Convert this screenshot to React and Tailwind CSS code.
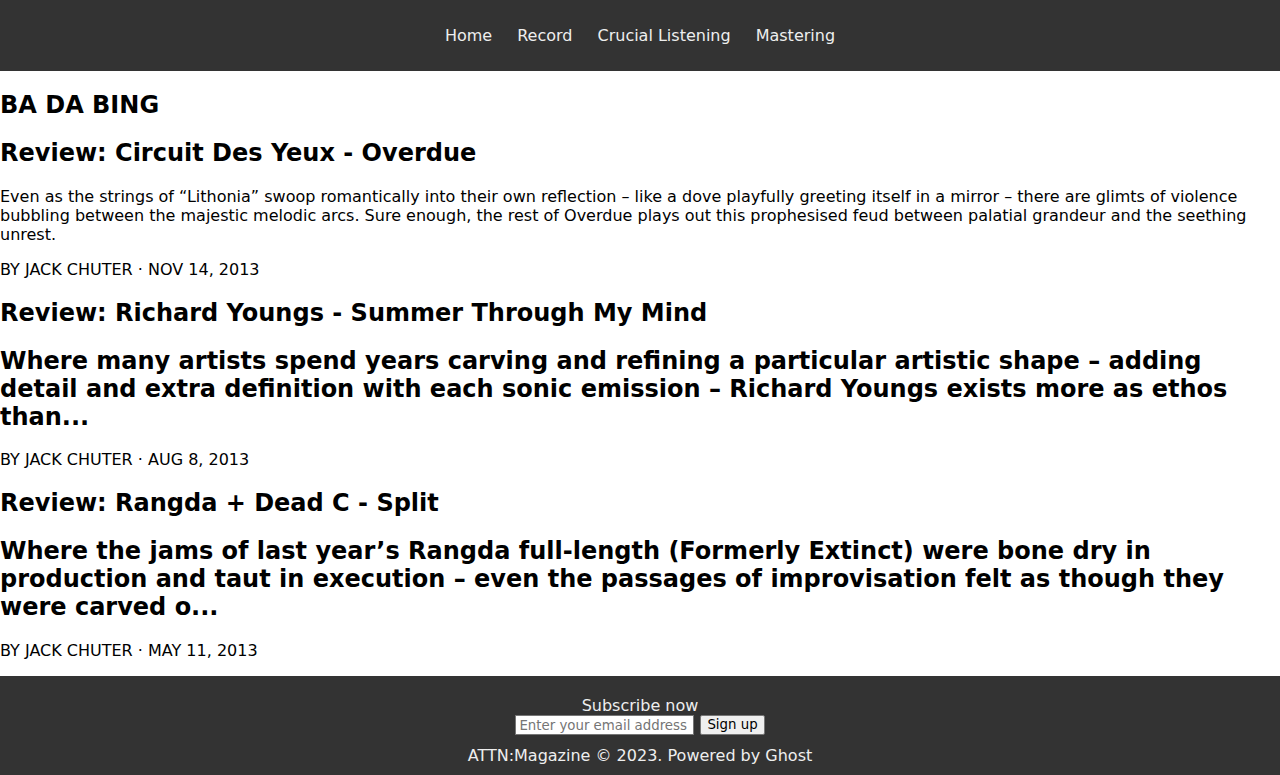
import React from 'react';

const navLinks = ['Home', 'Record', 'Crucial Listening', 'Mastering'];

const posts = [
    {
        id: 1,
        title: 'Review: Circuit Des Yeux - Overdue',
        excerpt: 'Even as the strings of “Lithonia” swoop romantically into their own reflection – like a dove playfully greeting itself in a mirror – there are glimts of violence bubbling between the majestic melodic arcs. Sure enough, the rest of Overdue plays out this prophesised feud between palatial grandeur and the seething unrest.',
        big: false,
        date: 'NOV 14, 2013',
    },
    {
        id: 2,
        title: 'Review: Richard Youngs - Summer Through My Mind',
        excerpt: 'Where many artists spend years carving and refining a particular artistic shape – adding detail and extra definition with each sonic emission – Richard Youngs exists more as ethos than...',
        big: true,
        date: 'AUG 8, 2013',
    },
    {
        id: 3,
        title: 'Review: Rangda + Dead C - Split',
        excerpt: 'Where the jams of last year’s Rangda full-length (Formerly Extinct) were bone dry in production and taut in execution – even the passages of improvisation felt as though they were carved o...',
        big: true,
        date: 'MAY 11, 2013',
    },
];

const App = () => {
    return (
        <div className="min-h-[775px] flex flex-col bg-white text-black font-['DejaVu_Sans',sans-serif] text-[16px] leading-[normal]">
            {/* CABECERA */}
            <header className="h-[71px] bg-[#333333] flex items-center justify-center">
                <nav className="flex gap-[25px]">
                    {navLinks.map((link) => (
                        <a key={link} href="#" className="text-[#eeeeee]">{link}</a>
                    ))}
                </nav>
            </header>

            {/* LISTA DE ARTICULOS */}
            <main className="flex-1 pt-[19.92px] pb-[15px]">
                <h2 className="text-[24px] font-bold">BA DA BING</h2>
                {posts.map((post) => (
                    <article key={post.id} className="mt-[19.92px]">
                        <h2 className="text-[24px] font-bold">{post.title}</h2>
                        {post.big ? (
                            <>
                                <h2 className="text-[24px] font-bold mt-[19.92px]">{post.excerpt}</h2>
                                <p className="mt-[19.92px]">BY JACK CHUTER · {post.date}</p>
                            </>
                        ) : (
                            <>
                                <p className="mt-[19.92px]">{post.excerpt}</p>
                                <p className="mt-[16px]">BY JACK CHUTER · {post.date}</p>
                            </>
                        )}
                    </article>
                ))}
            </main>

            {/* PIE */}
            <footer className="bg-[#333333] text-[#eeeeee] flex flex-col items-center pt-[20px] pb-[10px]">
                <p>Subscribe now</p>
                <form className="flex items-center gap-[6px]" onSubmit={(e) => e.preventDefault()}>
                    <input
                        type="email"
                        placeholder="Enter your email address"
                        className="w-[179px] h-[20px] bg-white border border-[#767676] px-[3px] text-[13.33px] text-black placeholder:text-[#757575] outline-none"
                    />
                    <button
                        type="submit"
                        className="h-[20px] px-[6px] bg-[#efefef] border border-[#767676] rounded-[2px] text-[13.33px] text-black leading-none"
                    >
                        Sign up
                    </button>
                </form>
                <p className="mt-[11px]">ATTN:Magazine © 2023. Powered by Ghost</p>
            </footer>
        </div>
    );
};

export default App;
